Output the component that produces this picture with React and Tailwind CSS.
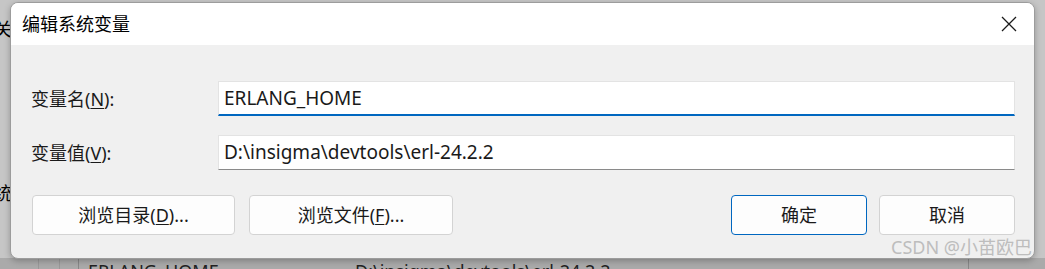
import React from 'react';

const font = { fontFamily: '"Noto Sans", "Noto Sans CJK SC", sans-serif' };

const Button = ({ children, primary, className = '' }) => (
  <button
    className={`h-[40px] rounded-[4px] bg-[#fdfdfd] text-[18px] leading-none text-[#1a1a1a] border ${
      primary ? 'border-[#0067c0]' : 'border-[#d3d3d3]'
    } ${className}`}
  >
    {children}
  </button>
);

const Field = ({ label, mnemonic, value, focused }) => (
  <div className="flex items-center">
    <label className="w-[187px] text-[18px] text-[#1a1a1a] leading-none">
      {label}(<span className="underline underline-offset-2">{mnemonic}</span>):
    </label>
    <div
      className={`flex-1 h-[35px] bg-white border border-[#e3e3e3] flex items-center pl-[5px] text-[19px] text-[#1a1a1a] ${
        focused ? 'border-b-2 border-b-[#0067c0]' : 'border-b-[#8a8a8a]'
      }`}
    >
      {value}
    </div>
  </div>
);

const App = () => {
  return (
    <div className="relative w-[1045px] h-[269px] overflow-hidden bg-[#c6c6c6] pt-[2px] pl-[10px]" style={font}>
      {/* Background window fragments */}
      <div className="absolute left-[-6px] top-[16px] text-[18px] text-black">关</div>
      <div className="absolute left-[-6px] top-[180px] text-[18px] text-black">统</div>
      <div className="absolute left-0 top-[258px] w-full h-[11px] bg-[#aaaaaa]">
        <div className="absolute left-[38px] top-0 h-full w-px bg-[#999]" />
        <div className="absolute left-[59px] top-0 h-full w-px bg-[#999]" />
        <div className="absolute left-[78px] top-0 h-full w-px bg-[#888]" />
        <div className="absolute left-[88px] top-[4px] text-[18px] leading-none text-[#222]">ERLANG_HOME</div>
        <div className="absolute left-[355px] top-[4px] text-[18px] leading-none text-[#222]">D:\insigma\devtools\erl-24.2.2</div>
        <div className="absolute left-[968px] top-0 h-full w-px bg-[#888]" />
      </div>

      {/* Dialog */}
      <div className="relative w-[1025px] h-[257px] rounded-[8px] overflow-hidden border border-[#9c9c9c] bg-[#f0f0f0] shadow-[0_2px_6px_rgba(0,0,0,0.25)] flex flex-col">
        <div className="h-[42px] bg-white flex items-center justify-between pl-[11px] pr-[16px]">
          <span className="text-[18px] text-black leading-none">编辑系统变量</span>
          <svg width="16" height="16" viewBox="0 0 16 16" className="mr-[1px]">
            <path d="M1 1L15 15M15 1L1 15" stroke="#1a1a1a" strokeWidth="1.3" />
          </svg>
        </div>
        <div className="flex-1 pl-[20px] pr-[19px] pt-[36px] flex flex-col">
          <div className="flex flex-col gap-[19px]">
            <Field label="变量名" mnemonic="N" value="ERLANG_HOME" focused />
            <Field label="变量值" mnemonic="V" value="D:\insigma\devtools\erl-24.2.2" />
          </div>
          <div className="flex mt-[25px] pl-[1px]">
            <Button className="w-[203px]">
              浏览目录(<span className="underline underline-offset-2">D</span>)...
            </Button>
            <Button className="w-[204px] ml-[14px]">
              浏览文件(<span className="underline underline-offset-2">F</span>)...
            </Button>
            <div className="flex-1" />
            <Button primary className="w-[136px]">确定</Button>
            <Button className="w-[136px] ml-[12px]">取消</Button>
          </div>
        </div>
        <div className="absolute right-[2px] bottom-[2px] text-[18px] leading-none text-[#bdbdbd]">
          CSDN @小苗欧巴
        </div>
      </div>
    </div>
  );
};

export default App;
